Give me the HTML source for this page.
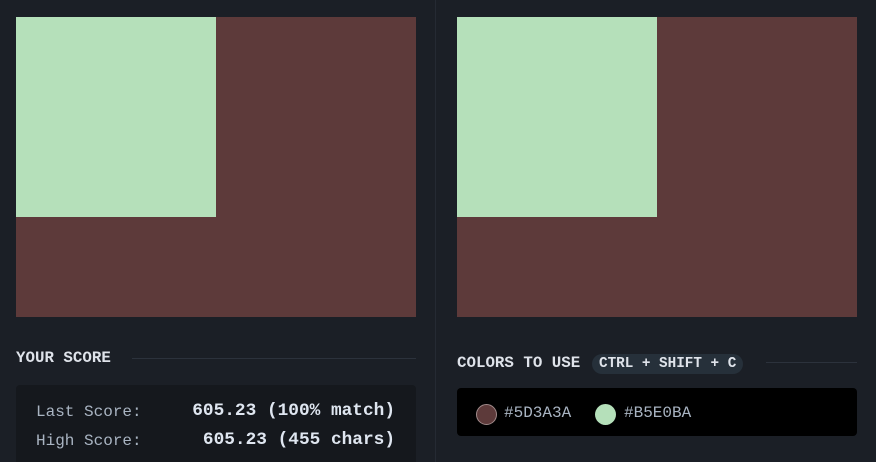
<!DOCTYPE html>
<html style="overflow:hidden;height:462px"><head><style>
*{margin:0;padding:0;box-sizing:border-box}
body{width:876px;height:462px;background:#1b1f26;font-family:"Liberation Mono",monospace;position:relative;overflow:hidden;color:#c9d1d9}
.div{position:absolute;left:435px;top:0;width:1px;height:462px;background:#252a33}
.cv{position:absolute;top:17px;width:400px;height:300px;background:#5d3a3a}
.cv i{position:absolute;left:0;top:0;width:200px;height:200px;background:#b5e0ba}
.h{position:absolute;font-weight:bold;font-size:15.8px;color:#dfe3ea}
.line{position:absolute;height:1px;background:#2c323c}
.box{position:absolute;left:16px;top:385px;width:400px;height:77px;background:#15181d;border-radius:4px 4px 0 0}
.r{position:absolute;white-space:pre}
.lbl{color:#a9b4c2;left:36px;font-size:16px}
.val{color:#dfe6f0;font-weight:bold;right:481px;font-size:17.8px}
.pill{position:absolute;left:592px;top:354px;height:20px;padding:0 7px;border-radius:10px;background:#26303a;font-size:14.3px;font-weight:bold;color:#dfe3ea;line-height:20px}
.cb{position:absolute;left:457px;top:388px;width:400px;height:48px;background:#000;border-radius:4px}
.c{position:absolute;top:404px;width:21px;height:21px;border-radius:50%}
.ct{position:absolute;top:404px;font-size:16px;color:#a9b4c2}
</style></head><body>
<div class="div"></div>
<div class="cv" style="left:16px"><i></i></div>
<div class="cv" style="left:457px"><i></i></div>
<div class="h" style="left:16px;top:349px">YOUR SCORE</div>
<div class="line" style="left:132px;top:358px;width:284px"></div>
<div class="box"></div>
<div class="r lbl" style="top:403px">Last Score:</div>
<div class="r val" style="top:401px">605.23 (100% match)</div>
<div class="r lbl" style="top:432px">High Score:</div>
<div class="r val" style="top:430px">605.23 (455 chars)</div>
<div class="h" style="left:457px;top:354px">COLORS TO USE</div>
<div class="pill">CTRL + SHIFT + C</div>
<div class="line" style="left:766px;top:362px;width:91px"></div>
<div class="cb"></div>
<div class="c" style="left:476px;background:#5d3a3a;border:1px solid #a08a8a"></div>
<div class="ct" style="left:504px">#5D3A3A</div>
<div class="c" style="left:595px;background:#b5e0ba"></div>
<div class="ct" style="left:624px">#B5E0BA</div>
</body></html>
